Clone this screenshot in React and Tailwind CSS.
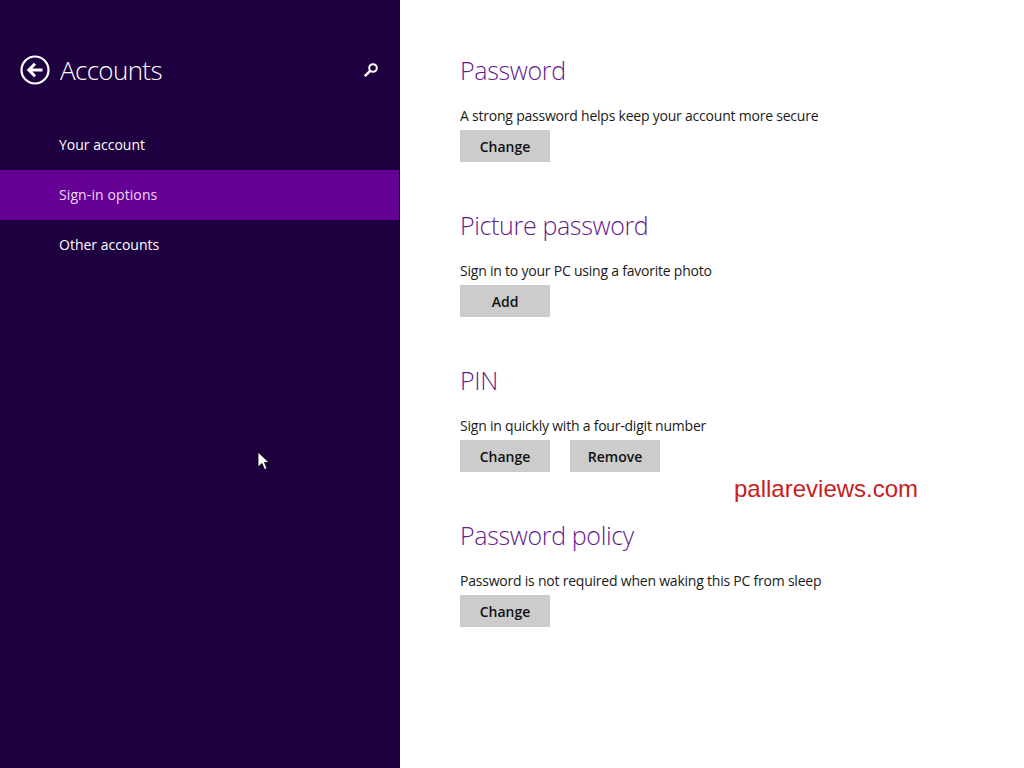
import { useState } from 'react';

const sections = [
    { title: 'Password', text: 'A strong password helps keep your account more secure', buttons: ['Change'] },
    { title: 'Picture password', text: 'Sign in to your PC using a favorite photo', buttons: ['Add'] },
    { title: 'PIN', text: 'Sign in quickly with a four-digit number', buttons: ['Change', 'Remove'] },
    { title: 'Password policy', text: 'Password is not required when waking this PC from sleep', buttons: ['Change'] },
];

const navItems = ['Your account', 'Sign-in options', 'Other accounts'];

function App() {
    const [active, setActive] = useState('Sign-in options');

    return (
        <div className="relative flex h-[768px] w-[1024px] overflow-hidden bg-white font-['Open_Sans',sans-serif]">
            <aside className="w-[400px] shrink-0 bg-[#1e0040] pt-[50px] text-white">
                <div className="flex h-[40px] items-center pl-5 pr-[20px]">
                    <button className="mr-[10px] flex h-[30px] w-[30px] items-center justify-center">
                        <svg width="30" height="30" viewBox="0 0 30 30" fill="none" stroke="#fff">
                            <circle cx="15" cy="15" r="13.5" strokeWidth="2.2" />
                            <path d="M22.5 15H9.5M15 8.8L8.8 15l6.2 6.2" strokeWidth="3" />
                        </svg>
                    </button>
                    <h1 className="flex-1 text-[26px] leading-[40px] font-light tracking-[-0.65px]">Accounts</h1>
                    <svg width="16" height="16" viewBox="0 0 16 16" fill="none" stroke="#fff" className="mr-[1px]">
                        <circle cx="10" cy="6" r="3.8" strokeWidth="2" />
                        <path d="M7.2 8.8L1.8 14.2" strokeWidth="2.6" />
                    </svg>
                </div>
                <nav className="mt-[30px]">
                    {navItems.map((item) => (
                        <div
                            key={item}
                            onClick={() => setActive(item)}
                            className={`flex h-[50px] items-center pb-[2px] pl-[59px] text-[14px] ${active === item ? 'mr-px bg-[#660094] text-[#f0d8f8] tracking-[0.1px]' : 'text-white'}`}
                        >
                            {item}
                        </div>
                    ))}
                </nav>
            </aside>

            <main className="flex-1 pl-[60px] pt-[50px]">
                {sections.map((section) => (
                    <section key={section.title} className="h-[155px]">
                        <h2 className="h-[40px] text-[25px] leading-[40px] font-light tracking-[-0.35px] text-[#661c8c]">{section.title}</h2>
                        <p className="mt-[16px] h-[19px] text-[14px] leading-[20px] tracking-[-0.22px] text-[#1a1a1a]">{section.text}</p>
                        <div className="mt-[5px] flex gap-5">
                            {section.buttons.map((label) => (
                                <button key={label} className="h-[32px] w-[90px] bg-[#cccccc] text-[14px] font-[550] text-[#111]">
                                    {label}
                                </button>
                            ))}
                        </div>
                    </section>
                ))}
            </main>

            <div className="absolute left-[734px] top-[475px] font-['Liberation_Sans',sans-serif] text-[24px] leading-[28px] text-[#c82020]">
                pallareviews.com
            </div>

            <svg className="absolute left-[257px] top-[451px]" width="13" height="20" viewBox="0 0 13 20">
                <path d="M1 1v15l4-3.5 2.5 6 2.5-1-2.5-6H12z" fill="#fff" stroke="#000" strokeWidth="0.8" />
            </svg>
        </div>
    );
}

export default App;
